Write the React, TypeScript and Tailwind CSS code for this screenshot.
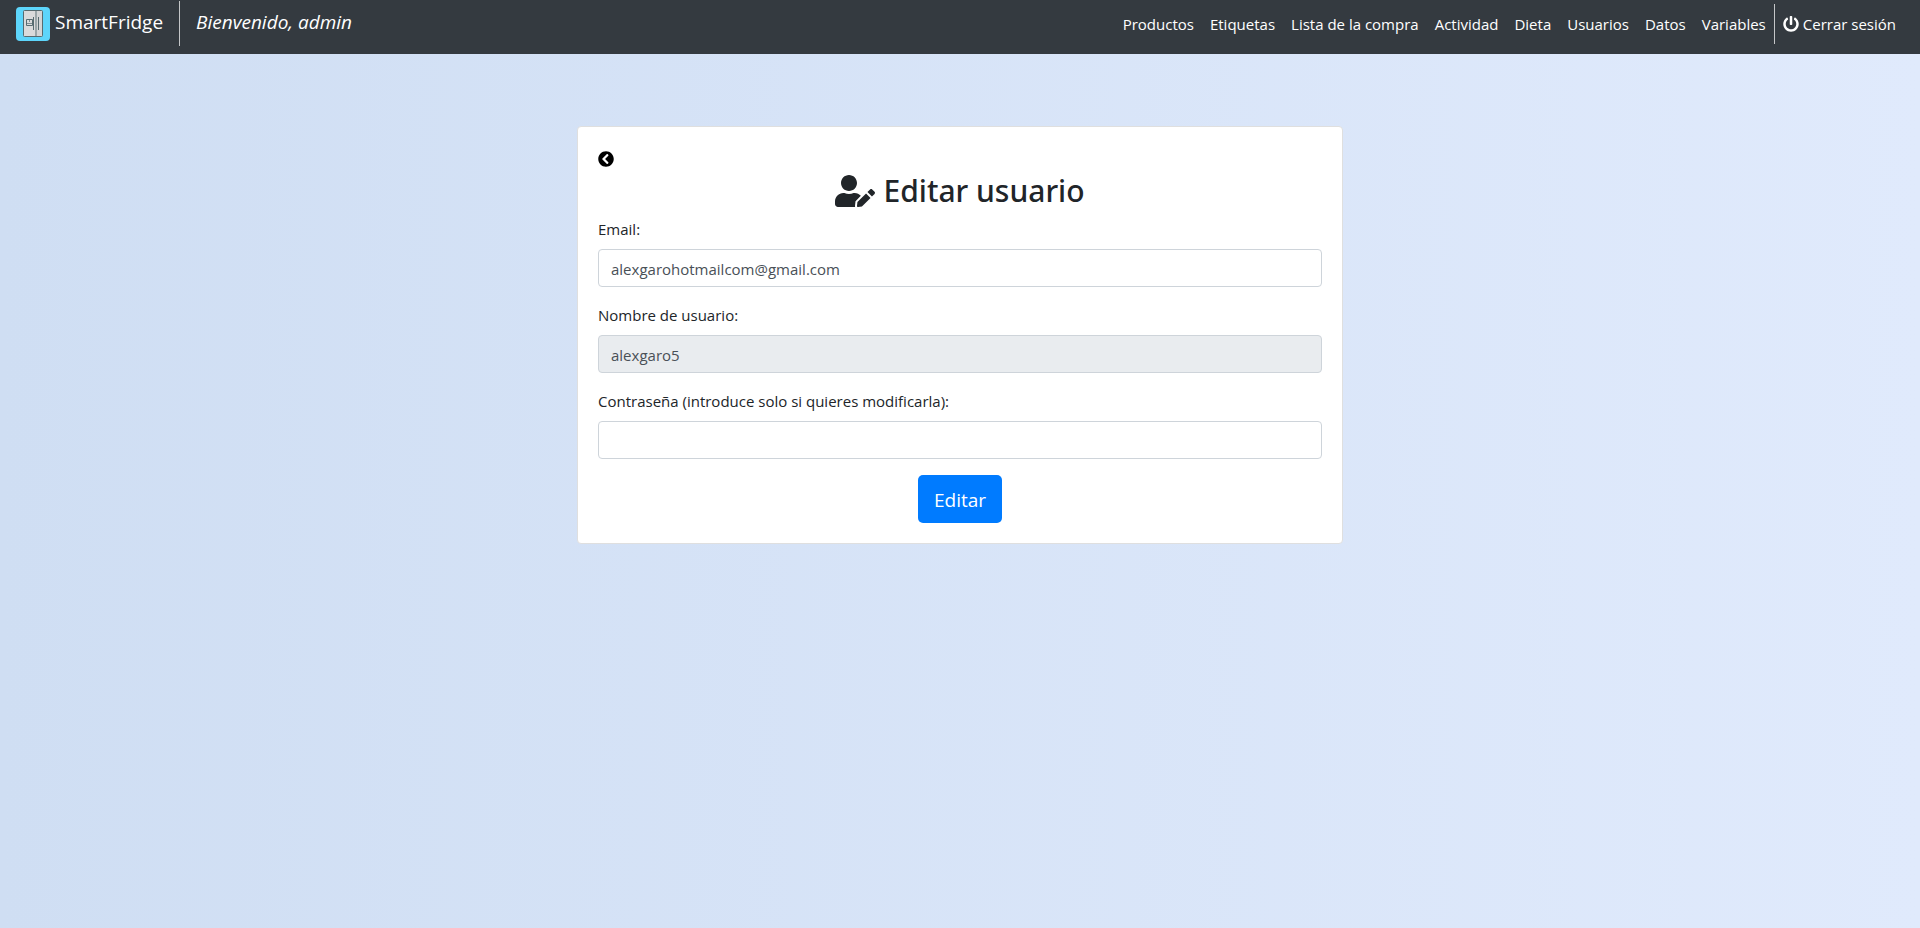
import { FaChevronCircleLeft, FaPowerOff, FaUserEdit } from 'react-icons/fa';

const links = [
  'Productos',
  'Etiquetas',
  'Lista de la compra',
  'Actividad',
  'Dieta',
  'Usuarios',
  'Datos',
  'Variables',
];

const inputClass =
  'block h-[38px] w-full rounded border border-[#ced4da] px-3 pt-0.5 text-[15px] text-[#495057] outline-none focus:border-[#80bdff]';

function FridgeLogo() {
  return (
    <svg viewBox="0 0 34 34" className="size-[34px] shrink-0" aria-hidden="true">
      <rect width="34" height="34" rx="4" fill="#5dd5fb" />
      <rect x="7.5" y="3.5" width="19" height="26" rx="1" fill="#dadadb" stroke="#576b70" />
      <rect x="19" y="4" width="2" height="25" fill="#9aa5a8" />
      <rect x="21" y="4" width="5" height="25" fill="#d3d4d5" />
      <path d="M17.5 10v13M22.5 10v13" stroke="#576b70" fill="none" />
      <path d="M10.5 12.5h6v6h-6z" stroke="#576b70" fill="none" />
      <path d="M11 16.5h5M13.5 13v2" stroke="#7f8d91" fill="none" />
    </svg>
  );
}

export default function App() {
  return (
    <div className="flex min-h-screen flex-col bg-linear-to-r/srgb from-[#cfdef3] to-[#e0eafc] font-['Open_Sans','Noto_Sans',sans-serif] text-[15px] leading-6 text-[#212529]">
      <header className="flex h-[54px] items-start justify-between bg-[#343a40] px-4 text-white">
        <div className="flex items-start">
          <a href="#" className="mt-[7px] flex h-[34px] items-center gap-[5px] pr-4 text-[19px]">
            <FridgeLogo />
            <span className="-mt-1">SmartFridge</span>
          </a>
          <p className="mt-px flex h-[45px] items-center border-l border-[#c4c6c8] pl-4 text-[19px] italic">
            <span className="-mt-1">Bienvenido, admin</span>
          </p>
        </div>
        <nav className="mt-1 flex h-10 items-center">
          {links.map((label) => (
            <a key={label} href="#" className="px-2">
              {label}
            </a>
          ))}
          <a href="#" className="flex h-10 items-center gap-1 border-l border-[#c4c6c8] px-2">
            <FaPowerOff className="size-4" />
            Cerrar sesión
          </a>
        </nav>
      </header>

      <main className="mx-auto mt-[72px] w-full max-w-[766px] rounded border border-[#dfdfdf] bg-white p-5">
        <a href="#" aria-label="Volver" className="flex h-6 items-center text-black">
          <FaChevronCircleLeft className="size-4" />
        </a>
        <h1 className="mb-2 flex h-[38px] items-center justify-center gap-2 pt-0.5 font-['Noto_Sans','Open_Sans',sans-serif] text-[30px] font-medium">
          <FaUserEdit className="h-8 w-10" />
          Editar usuario
        </h1>
        <form onSubmit={(event) => event.preventDefault()}>
          <div className="mb-4">
            <label htmlFor="email" className="mb-2 block">
              Email:
            </label>
            <input id="email" type="email" defaultValue="alexgarohotmailcom@gmail.com" className={inputClass} />
          </div>
          <div className="mb-4">
            <label htmlFor="username" className="mb-2 block">
              Nombre de usuario:
            </label>
            <input id="username" type="text" readOnly defaultValue="alexgaro5" className={`${inputClass} bg-[#e9ecef]`} />
          </div>
          <div className="mb-4">
            <label htmlFor="password" className="mb-2 block">
              Contraseña (introduce solo si quieres modificarla):
            </label>
            <input id="password" type="password" className={inputClass} />
          </div>
          <button type="submit" className="mx-auto flex h-12 items-center justify-center rounded-[5px] bg-[#007bff] px-4 pt-0.5 text-[19px] text-white">
            Editar
          </button>
        </form>
      </main>
    </div>
  );
}
